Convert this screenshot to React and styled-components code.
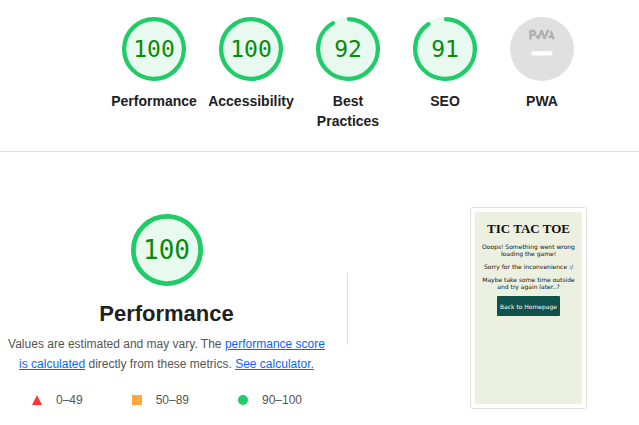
import React from "react";
import styled, { createGlobalStyle } from "styled-components";

const GlobalStyle = createGlobalStyle`
  *, *::before, *::after { box-sizing: border-box; }
  body {
    margin: 0;
    background: #fff;
    color: #212121;
    font-family: "Liberation Sans", Arial, sans-serif;
    font-size: 12px;
    line-height: 20px;
  }
  h1, h2, p, ul { margin: 0; padding: 0; }
`;

const ScoresHeader = styled.header`
  display: flex;
  justify-content: center;
  padding: 17px 0 20px 57px;
  border-bottom: 1px solid #e0e0e0;
`;

const GaugeLink = styled.a`
  display: flex;
  flex-direction: column;
  align-items: center;
  gap: 10px;
  width: 97px;
  color: inherit;
  text-decoration: none;
`;

const GaugeLabel = styled.span`
  max-width: 90px;
  font-size: 14px;
  font-weight: 700;
  text-align: center;
`;

const Dial = styled.span`
  display: grid;
  place-items: center;
  width: ${(p) => p.$size}px;
  height: ${(p) => p.$size}px;

  > * { grid-area: 1 / 1; }
`;

const DialDrawing = styled.svg`
  display: block;
  width: 100%;
  height: 100%;
`;

const DialValue = styled.span`
  color: #0a8a0a;
  font-family: "DejaVu Sans Mono", monospace;
  font-size: ${(p) => p.$size}px;
`;

const Category = styled.main`
  display: grid;
  grid-template-columns: minmax(0, 333fr) 28px minmax(0, 278fr);
  padding: 55px 0 16px;
`;

const Summary = styled.section`
  display: flex;
  flex-direction: column;
  align-items: center;
  padding-top: 7px;
`;

const Title = styled.h1`
  margin-top: 14px;
  font-size: 22px;
  font-weight: 700;
  line-height: 28px;
`;

const Description = styled.p`
  margin-top: 6px;
  padding: 0 6px;
  color: #555;
  text-align: center;

  a { color: #0c66f5; }
`;

const Legend = styled.ul`
  display: flex;
  justify-content: space-between;
  align-self: stretch;
  margin-top: 16px;
  padding: 0 31px 0 32px;
  color: #555;
  list-style: none;
`;

const LegendItem = styled.li`
  display: flex;
  align-items: center;
  gap: 14px;
`;

const Marker = styled.svg`
  width: 10px;
  height: 10px;
`;

const Divider = styled.div`
  place-self: center;
  width: 1px;
  height: 72px;
  background: #e0e0e0;
`;

const Preview = styled.section`
  display: flex;
  justify-content: center;
  align-items: flex-start;
  padding-left: 57px;
`;

const Frame = styled.div`
  padding: 4px;
  border: 1px solid #e0e0e0;
  border-radius: 3px;
`;

const Screen = styled.div`
  display: flex;
  flex-direction: column;
  align-items: center;
  gap: 6px;
  width: 107px;
  min-height: 192px;
  padding-top: 9px;
  background: #ecf0e1;
  color: #111;
  font-family: "DejaVu Sans", Verdana, sans-serif;
  font-size: 6px;
  line-height: 7px;
  text-align: center;
  white-space: nowrap;
`;

const GameTitle = styled.h2`
  font-family: "Liberation Serif", "Times New Roman", serif;
  font-size: 13px;
  font-weight: 700;
  line-height: 16px;
`;

const HomeButton = styled.button`
  height: 20px;
  padding: 0 3px;
  border: 0;
  border-radius: 1px;
  background: #0f524b;
  color: #fff;
  font: inherit;
`;

function Gauge({ score, size, fontSize }) {
  const radius = 56;
  const stroke = 8;
  const length = 2 * Math.PI * radius;
  const dash = score === 100 ? length : (score / 100) * length - stroke / 2;
  return (
    <Dial $size={size}>
      <DialDrawing viewBox="0 0 120 120" aria-hidden="true">
        <circle cx="60" cy="60" r="60" fill="#e8f9f0" />
        <circle
          cx="60"
          cy="60"
          r={radius}
          fill="none"
          stroke="#1fcc67"
          strokeWidth={stroke}
          strokeLinecap="round"
          strokeDasharray={`${dash} ${length}`}
          transform="rotate(-88 60 60)"
        />
      </DialDrawing>
      <DialValue $size={fontSize}>{score}</DialValue>
    </Dial>
  );
}

function PwaBadge() {
  return (
    <Dial $size={64}>
      <DialDrawing viewBox="0 0 60 60" aria-hidden="true">
        <circle cx="30" cy="30" r="30" fill="#e0e0e0" />
        <g fill="none" stroke="#b0b0b0" strokeWidth="2.2" strokeLinejoin="bevel">
          <path d="M19.1 21v-7.9h2.5a1.9 1.9 0 0 1 0 3.8h-2" />
          <path d="M25 17.2l1.6 3.1 3-7.7 2.7 7.7L35.9 12" />
          <path d="M36 18.5h3.6M38.2 13.2L40.9 21" />
        </g>
        <rect x="20" y="32" width="20" height="4" rx="2" fill="#fff" />
      </DialDrawing>
    </Dial>
  );
}

const categories = [
  { label: "Performance", score: 100 },
  { label: "Accessibility", score: 100 },
  { label: "Best Practices", score: 92 },
  { label: "SEO", score: 91 },
];

export default function App() {
  return (
    <>
      <GlobalStyle />
      <ScoresHeader>
        {categories.map(({ label, score }) => (
          <GaugeLink key={label} href={`#${label}`}>
            <Gauge score={score} size={64} fontSize={23} />
            <GaugeLabel>{label}</GaugeLabel>
          </GaugeLink>
        ))}
        <GaugeLink href="#PWA">
          <PwaBadge />
          <GaugeLabel>PWA</GaugeLabel>
        </GaugeLink>
      </ScoresHeader>
      <Category>
        <Summary>
          <Gauge score={100} size={72} fontSize={26} />
          <Title>Performance</Title>
          <Description>
            Values are estimated and may vary. The{" "}
            <a href="#scoring">performance score is calculated</a> directly from
            these metrics. <a href="#calculator">See calculator.</a>
          </Description>
          <Legend>
            <LegendItem>
              <Marker viewBox="0 0 10 10" aria-hidden="true">
                <path d="M5 0l5 10H0z" fill="#ff3333" />
              </Marker>
              0–49
            </LegendItem>
            <LegendItem>
              <Marker viewBox="0 0 10 10" aria-hidden="true">
                <path d="M0 0h10v10H0z" fill="#ffa63c" />
              </Marker>
              50–89
            </LegendItem>
            <LegendItem>
              <Marker viewBox="0 0 10 10" aria-hidden="true">
                <circle cx="5" cy="5" r="5" fill="#1fcc67" />
              </Marker>
              90–100
            </LegendItem>
          </Legend>
        </Summary>
        <Divider />
        <Preview>
          <Frame>
            <Screen>
              <GameTitle>TIC TAC TOE</GameTitle>
              <p>
                Ooops! Something went wrong
                <br />
                loading the game!
              </p>
              <p>Sorry for the inconvenience :/</p>
              <p>
                Maybe take some time outside
                <br />
                and try again later..?
              </p>
              <HomeButton type="button">Back to Homepage</HomeButton>
            </Screen>
          </Frame>
        </Preview>
      </Category>
    </>
  );
}
